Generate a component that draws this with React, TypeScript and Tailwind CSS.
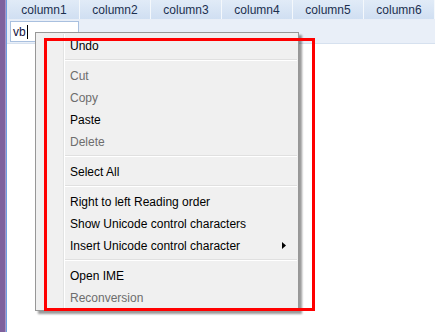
import React from "react";

type Item = { label: string; disabled?: boolean; arrow?: boolean } | "sep";

const items: Item[] = [
  { label: "Undo" },
  "sep",
  { label: "Cut", disabled: true },
  { label: "Copy", disabled: true },
  { label: "Paste" },
  { label: "Delete", disabled: true },
  "sep",
  { label: "Select All" },
  "sep",
  { label: "Right to left Reading order" },
  { label: "Show Unicode control characters" },
  { label: "Insert Unicode control character", arrow: true },
  "sep",
  { label: "Open IME" },
  { label: "Reconversion", disabled: true },
];

const cols = ["column1", "column2", "column3", "column4", "column5", "column6"];

export default function App() {
  return (
    <div
      className="relative w-[435px] h-[332px] bg-white overflow-hidden flex"
      style={{ fontFamily: '"Liberation Sans", Arial, sans-serif' }}
    >
      {/* left strip */}
      <div className="w-[6px] bg-[#7e619d]" />
      <div className="w-px bg-[#a894c4]" />
      <div className="w-px bg-[#6d9ee0]" />

      <div className="flex-1 flex flex-col">
        {/* header */}
        <div className="flex h-[20px] border-b border-[#e8eef7]">
          <div className="w-[2px] bg-[#dfe7f2]" />
          {cols.map((c) => (
            <div
              key={c}
              className="w-[71px] shrink-0 flex items-center justify-center text-[12px] text-[#1b2f4f] bg-gradient-to-b from-[#e1ebf7] to-[#d0dff2] border-r border-[#f4f8fc]"
            >
              {c}
            </div>
          ))}
        </div>
        {/* row 1 */}
        <div className="flex h-[24px] bg-[#e9eff8] border-b border-[#d6e1ef] items-center">
          <div className="ml-[3px] w-[69px] h-[21px] bg-white border border-[#a9c0df] flex items-center pl-[2px] text-[12px] text-[#141440]">
            vb<span className="inline-block w-px h-[14px] bg-black ml-px" />
          </div>
        </div>
        <div className="flex-1 bg-white" />
      </div>

      {/* context menu */}
      <div className="absolute left-[35px] top-[32px] w-[264px] bg-[#f0f0f0] border border-[#979797] pt-px pb-[2px] pr-px shadow-[3px_3px_2px_rgba(0,0,0,0.4)]">
        {items.map((it, i) =>
          it === "sep" ? (
            <div key={i} className="flex h-[8px]">
              <div className="w-[28px] border-r border-[#e2e3e3] shadow-[1px_0_0_#ffffff]" />
              <div className="flex-1 flex flex-col justify-center pl-[1px]">
                <div className="h-px bg-[#e0e0e0]" />
                <div className="h-px bg-white" />
              </div>
            </div>
          ) : (
            <div key={i} className="flex h-[22px]">
              <div className="w-[28px] border-r border-[#e2e3e3] shadow-[1px_0_0_#ffffff]" />
              <div
                className={
                  "flex-1 flex items-center pl-[6px] pr-[11px] pt-px text-[12px] " +
                  (it.disabled ? "text-[#6d6d6d]" : "text-black")
                }
              >
                <span className="flex-1">{it.label}</span>
                {it.arrow && (
                  <svg width="4" height="7" viewBox="0 0 4 7">
                    <path d="M0 0 L4 3.5 L0 7 Z" fill="#000" />
                  </svg>
                )}
              </div>
            </div>
          )
        )}
      </div>

      {/* red highlight */}
      <div className="absolute left-[44px] top-[38px] w-[271px] h-[273px] border-[3px] border-[#ff0000]" />
    </div>
  );
}
